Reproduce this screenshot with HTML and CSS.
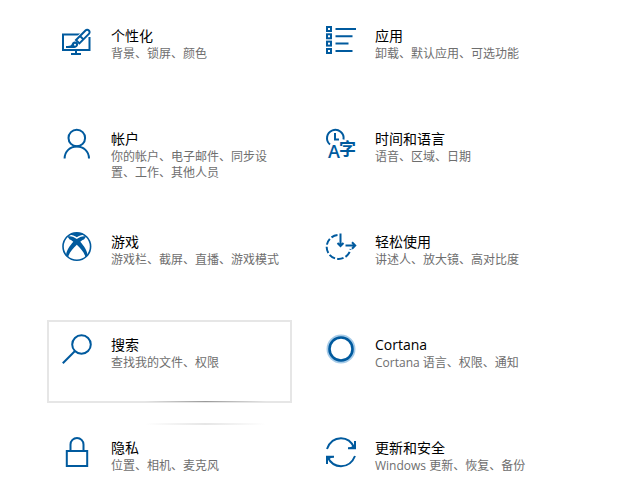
FILE: index.html
```html
<!DOCTYPE html>
<html lang="zh-CN">
<head>
    <meta charset="UTF-8">
    <meta name="viewport" content="width=device-width, initial-scale=1.0">
    <title>设置</title>
    <link rel="stylesheet" href="styles.css">
</head>
<body>

    <main class="settings-grid">
        <a class="tile" href="#personalization">
            <svg class="icon" viewBox="0 0 30 30" aria-hidden="true">
                <path d="M20 8.500H1V24h26.500V11"/>
                <path d="M14 24v4M9 28h10"/>
                <path class="cutout" d="M25 6L13 18"/>
                <path d="M23.500 4.500L14 14l3.400 3.400L26.900 7.900c2.200-2.200-1.200-5.600-3.400-3.400zM18 10l3.400 3.400"/>
                <path class="solid" d="M4 20c4 .3 5-.2 6-2.400 1-2.400 4.200-2.600 5.600-.8 1.400 2.200-.2 5-3.200 5.200H4z"/>
                <circle class="hole" cx="13" cy="18.800" r="1"/>
            </svg>
            <div class="text">
                <h2>个性化</h2>
                <p>背景、锁屏、颜色</p>
            </div>
        </a>

        <a class="tile" href="#apps">
            <svg class="icon" viewBox="0 0 30 30" aria-hidden="true">
                <rect x="1" y="1" width="4" height="4"/>
                <rect x="1" y="8.300" width="4" height="4"/>
                <rect x="1" y="15.600" width="4" height="4"/>
                <rect x="1" y="23" width="4" height="4"/>
                <path d="M9.500 3H30M9.500 10.300h17M9.500 17.600h13M9.500 25h17"/>
            </svg>
            <div class="text">
                <h2>应用</h2>
                <p>卸载、默认应用、可选功能</p>
            </div>
        </a>

        <a class="tile" href="#accounts">
            <svg class="icon" viewBox="0 0 30 30" aria-hidden="true">
                <circle cx="14.800" cy="9" r="8.300"/>
                <path d="M2.600 29.500C2.600 22.500 8 17.500 14.800 17.500S27 22.500 27 29.500"/>
            </svg>
            <div class="text">
                <h2>帐户</h2>
                <p>你的帐户、电子邮件、同步设置、工作、其他人员</p>
            </div>
        </a>

        <a class="tile" href="#time-language">
            <svg class="icon" viewBox="0 0 30 30" aria-hidden="true">
                <path d="M4 15.500A8.300 8.300 0 1 1 17.500 10.500"/>
                <path d="M9 4v6.500h4"/>
                <text class="latin" x="2" y="29" font-size="18">A</text>
                <text x="13" y="26" font-size="17">字</text>
            </svg>
            <div class="text">
                <h2>时间和语言</h2>
                <p>语音、区域、日期</p>
            </div>
        </a>

        <a class="tile" href="#gaming">
            <svg class="icon" viewBox="0 0 30 30" aria-hidden="true">
                <circle cx="14.800" cy="14.500" r="13.800" stroke-width="1.600"/>
                <path class="solid" d="M5.500 4.500C8.500 3.500 12 5 14.800 7c2.800-2 6.300-3.500 9.300-2.500L22 7.500c-1.200 0-2.500 1-3.700 2.300 3.500 4 7 9 7.200 13.200l-2 2.200c-1.200-4.500-5-9.200-8.700-12.400-3.700 3.200-7.500 7.900-8.700 12.400l-2-2.200c.2-4.200 3.700-9.200 7.200-13.200C10 8.500 8.800 7.500 7.600 7.500z"/>
                <path class="solid" d="M7 2.800C11 .5 18.600.5 22.600 2.800 20 2.600 17 3.800 14.800 5.200 12.600 3.800 9.600 2.600 7 2.800z"/>
            </svg>
            <div class="text">
                <h2>游戏</h2>
                <p>游戏栏、截屏、直播、游戏模式</p>
            </div>
        </a>

        <a class="tile" href="#ease-of-access">
            <svg class="icon" viewBox="0 0 30 30" aria-hidden="true">
                <path d="M11.500 3A12 12 0 1 0 24.500 17" stroke-dasharray="6.500 2.200"/>
                <path d="M14.500 1.500v12.500M11.500 11l3 3 3-3"/>
                <path d="M19.500 13.500H29M26 10.300l3.200 3.200-3.200 3.200"/>
            </svg>
            <div class="text">
                <h2>轻松使用</h2>
                <p>讲述人、放大镜、高对比度</p>
            </div>
        </a>

        <a class="tile tile-active" href="#search">
            <svg class="icon" viewBox="0 0 30 30" aria-hidden="true">
                <circle cx="19.500" cy="9.500" r="9.300"/>
                <path d="M13 16L.800 28.200"/>
            </svg>
            <div class="text">
                <h2>搜索</h2>
                <p>查找我的文件、权限</p>
            </div>
        </a>

        <a class="tile" href="#cortana">
            <svg class="icon" viewBox="0 0 30 30" aria-hidden="true">
                <circle class="halo" cx="15" cy="14" r="13"/>
                <circle cx="15" cy="14" r="11.500" stroke-width="2.600"/>
            </svg>
            <div class="text">
                <h2>Cortana</h2>
                <p>Cortana 语言、权限、通知</p>
            </div>
        </a>

        <a class="tile tile-near" href="#privacy">
            <svg class="icon" viewBox="0 0 30 30" aria-hidden="true">
                <rect x="4.800" y="13" width="20.400" height="15"/>
                <path d="M8.500 13V6.500a6.500 6.500 0 0 1 13 0V13"/>
            </svg>
            <div class="text">
                <h2>隐私</h2>
                <p>位置、相机、麦克风</p>
            </div>
        </a>

        <a class="tile" href="#update-security">
            <svg class="icon" viewBox="0 0 30 30" aria-hidden="true">
                <path d="M1 11C4 3 9.500.300 15 .300S25.500 3.500 28.500 10"/>
                <path d="M29 18c-3 7.500-8.500 10.200-14 10.200S4.500 25 1.500 19"/>
                <path class="solid" d="M28 3h2v8.300h-8v-2l3-.3 3-2zM2 26H0v-8.300h8v2l-3 .3-3 2z"/>
            </svg>
            <div class="text">
                <h2>更新和安全</h2>
                <p>Windows 更新、恢复、备份</p>
            </div>
        </a>
    </main>

</body>
</html>
```

FILE: styles.css
```css
body {
    font-family: "Open Sans", "Noto Sans CJK SC", sans-serif;
    margin: 0;
    background-color: #fff;
    color: #000;
}

.settings-grid {
    display: grid;
    grid-template-columns: 1fr 1fr;
    grid-auto-rows: minmax(83px, auto);
    gap: 20px 19px;
    padding: 11px 72px 0 47px;
}

.tile {
    position: relative;
    display: flex;
    align-items: flex-start;
    gap: 19px;
    box-sizing: border-box;
    padding: 13px 0 0 13px;
    border: 2px solid transparent;
    color: inherit;
    text-decoration: none;
}

.tile-active {
    border-color: #e6e6e6;
}

.tile-active::after,
.tile-near::before {
    content: "";
    position: absolute;
    left: 40%;
    right: 10%;
}

.tile-active::after {
    bottom: -1px;
    height: 1px;
    background: linear-gradient(to right, transparent, #999, transparent);
}

.tile-near::before {
    top: -2px;
    height: 2px;
    background: linear-gradient(to right, transparent, #e6e6e6, transparent);
}

.icon {
    flex: none;
    width: 30px;
    height: 30px;
    overflow: visible;
    fill: none;
    stroke: #005a9e;
    stroke-width: 2;
}

.icon .solid,
.icon text {
    fill: #005a9e;
    stroke: none;
}

.icon text {
    font-family: "Noto Sans CJK SC", sans-serif;
    font-weight: bold;
}

.icon .latin {
    font-family: "Open Sans", sans-serif;
    font-weight: 600;
}

.icon .cutout {
    stroke: #fff;
    stroke-width: 8;
}

.icon .hole {
    fill: #fff;
    stroke: none;
}

.icon .halo {
    stroke: #a6cbe8;
    stroke-width: 3;
}

.text {
    flex: 1;
}

.text h2 {
    font-size: 14px;
    line-height: 20px;
    font-weight: normal;
    margin: 0;
}

.text p {
    font-size: 12px;
    line-height: 16px;
    color: #6e6e6e;
    margin: 0;
    padding-right: 8px;
}
```
